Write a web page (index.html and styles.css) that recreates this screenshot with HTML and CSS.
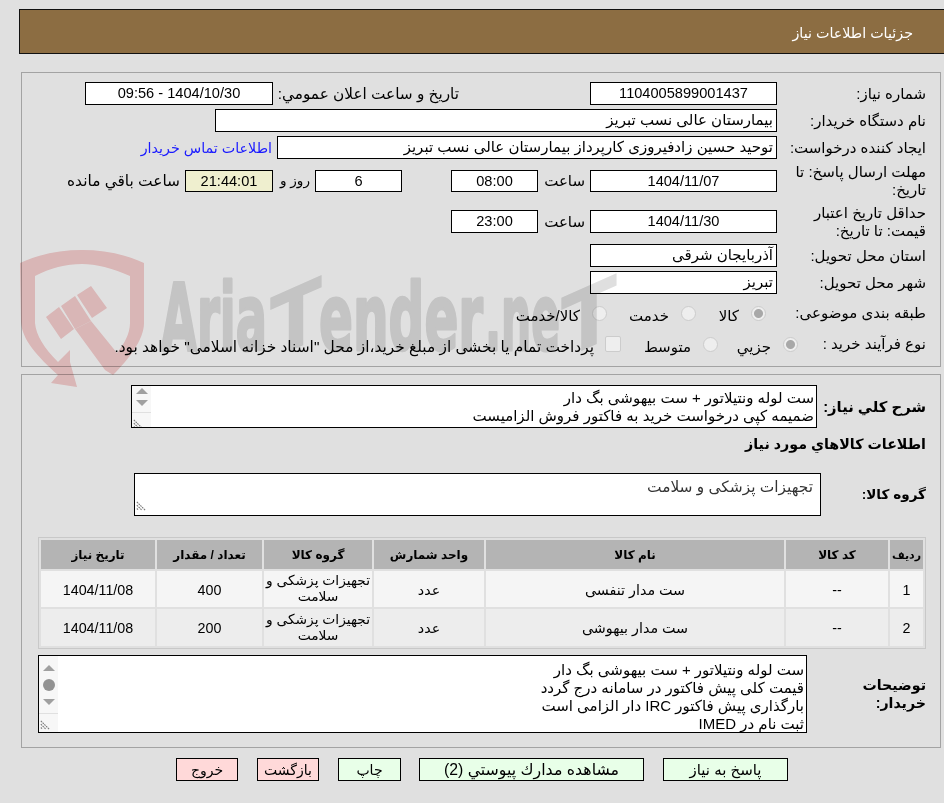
FILE: index.html
```html
<!DOCTYPE html>
<html lang="fa" dir="rtl">
<head>
<meta charset="utf-8">
<title>جزئیات اطلاعات نیاز</title>
<link rel="stylesheet" href="styles.css">
</head>
<body>
<div class="page">
  <header class="head">جزئیات اطلاعات نیاز</header>

  <section class="panel first">
    <div class="row h23">
      <label class="lab">شماره نیاز:</label>
      <div class="box w187 center">1104005899001437</div>
      <span class="lab2 pub">تاریخ و ساعت اعلان عمومي:</span>
      <div class="box w188 center">1404/10/30 - 09:56</div>
    </div>
    <div class="row h23">
      <label class="lab">نام دستگاه خریدار:</label>
      <div class="box w562">بیمارستان عالی نسب تبریز</div>
    </div>
    <div class="row h23">
      <label class="lab">ایجاد کننده درخواست:</label>
      <div class="box w500">توحید حسین زادفیروزی کارپرداز بیمارستان عالی نسب تبریز</div>
      <a class="link" href="#">اطلاعات تماس خریدار</a>
    </div>
    <div class="row h36">
      <label class="lab">مهلت ارسال پاسخ: تا تاریخ:</label>
      <div class="box w187 h22 center">1404/11/07</div>
      <span class="lab2 saat">ساعت</span>
      <div class="box w87 h22 center">08:00</div>
      <div class="box w87 h22 center days">6</div>
      <span class="lab2 rooz">روز و</span>
      <div class="box w88 h22 center timer">21:44:01</div>
      <span class="lab2 left">ساعت باقي مانده</span>
    </div>
    <div class="row h37">
      <label class="lab">حداقل تاریخ اعتبار قیمت: تا تاریخ:</label>
      <div class="box w187 center">1404/11/30</div>
      <span class="lab2 saat">ساعت</span>
      <div class="box w87 center">23:00</div>
    </div>
    <div class="row h23">
      <label class="lab">استان محل تحویل:</label>
      <div class="box w187">آذربایجان شرقی</div>
    </div>
    <div class="row h23">
      <label class="lab">شهر محل تحویل:</label>
      <div class="box w187">تبریز</div>
    </div>
    <div class="row h30">
      <label class="lab">طبقه بندی موضوعی:</label>
      <div class="opts kind">
        <span class="opt w70"><input class="rad" type="radio" name="k" disabled checked><span>کالا</span></span>
        <span class="opt w89"><input class="rad" type="radio" name="k" disabled><span>خدمت</span></span>
        <span class="opt"><input class="rad" type="radio" name="k" disabled><span>کالا/خدمت</span></span>
      </div>
    </div>
    <div class="row h24">
      <label class="lab narrow">نوع فرآیند خرید :</label>
      <div class="opts">
        <span class="opt w80"><input class="rad" type="radio" name="p" disabled checked><span>جزیي</span></span>
        <span class="opt w97"><input class="rad" type="radio" name="p" disabled><span>متوسط</span></span>
        <span class="opt tight-gap"><input class="chk" type="checkbox" disabled><span>پرداخت تمام یا بخشی از مبلغ خرید،از محل "اسناد خزانه اسلامی" خواهد بود.</span></span>
      </div>
    </div>
  </section>

  <section class="panel second">
    <div class="row">
      <label class="lab bold wide w109">شرح كلي نياز:</label>
      <div class="ta w686 h43">
        <div class="ta-text">ست لوله ونتیلاتور + ست بیهوشی بگ دار<br>ضمیمه کپی درخواست خرید به فاکتور فروش الزامیست</div>
        <div class="sb">
          <svg class="arrow" viewBox="0 0 12 6"><path d="M6 0 12 6H0Z"/></svg>
          <svg class="arrow" viewBox="0 0 12 6"><path d="M0 0H12L6 6Z"/></svg>
          <div class="grip"><svg viewBox="0 0 12 12"><path d="M1 1 11 11M1 5 7 11M1 9 3 11"/></svg></div>
        </div>
      </div>
    </div>
    <h2 class="title">اطلاعات كالاهاي مورد نياز</h2>
    <div class="row group">
      <label class="lab bold small w105">گروه کالا:</label>
      <div class="ta w687 h43 grey">
        <div class="ta-text pad-group">تجهیزات پزشکی و سلامت</div>
        <div class="sb plain">
          <div class="grip"><svg viewBox="0 0 12 12"><path d="M1 1 11 11M1 5 7 11M1 9 3 11"/></svg></div>
        </div>
      </div>
    </div>
    <div class="tablewrap">
      <table class="grid">
        <colgroup>
          <col class="c1"><col class="c2"><col class="c3"><col class="c4"><col class="c5"><col class="c6"><col class="c7">
        </colgroup>
        <thead>
          <tr><th class="thin">رديف</th><th>کد کالا</th><th>نام کالا</th><th>واحد شمارش</th><th>گروه کالا</th><th>تعداد / مقدار</th><th>تاریخ نیاز</th></tr>
        </thead>
        <tbody>
          <tr class="odd"><td>1</td><td>--</td><td>ست مدار تنفسی</td><td>عدد</td><td class="tight">تجهیزات پزشکی و سلامت</td><td>400</td><td>1404/11/08</td></tr>
          <tr class="even"><td>2</td><td>--</td><td>ست مدار بیهوشی</td><td>عدد</td><td class="tight">تجهیزات پزشکی و سلامت</td><td>200</td><td>1404/11/08</td></tr>
        </tbody>
      </table>
    </div>
    <div class="row notes">
      <label class="lab bold w119">توضیحات خریدار:</label>
      <div class="ta w769 h78">
        <div class="ta-text">ست لوله ونتیلاتور + ست بیهوشی بگ دار<br>قیمت کلی پیش فاکتور در سامانه درج گردد<br>بارگذاری پیش فاکتور IRC دار الزامی است<br>ثبت نام در IMED</div>
        <div class="sb">
          <svg class="arrow" viewBox="0 0 12 6"><path d="M6 0 12 6H0Z"/></svg>
          <span class="thumb"></span>
          <svg class="arrow" viewBox="0 0 12 6"><path d="M0 0H12L6 6Z"/></svg>
          <div class="grip"><svg viewBox="0 0 12 12"><path d="M1 1 11 11M1 5 7 11M1 9 3 11"/></svg></div>
        </div>
      </div>
    </div>
  </section>

  <nav class="actions">
    <button class="btn ok b125" type="button">پاسخ به نیاز</button>
    <button class="btn ok b225" type="button">مشاهده مدارك پیوستي (2)</button>
    <button class="btn ok b63" type="button">چاپ</button>
    <button class="btn no b62" type="button">بازگشت</button>
    <button class="btn no b62" type="button">خروج</button>
  </nav>

  <svg class="mark" viewBox="0 0 944 803" aria-hidden="true">
    <g class="shield">
      <path d="M20 263C40 254 60 250 82 250C104 250 124 254 144 263V323C144 340 128 360 113 375L105 370L75 329L91 321L117 353C124 344 130 334 130 323V276C112 268 96 264 82 264C66 264 50 268 35 276V323C36 335 44 348 58 362L70 350V362L77 387L51 383L58 375C38 357 22 340 21 322Z"/>
      <path d="M46 317 59 307 74 329 61 339Z"/>
      <path d="M61 306 75 296 91 321 75 329Z"/>
      <path d="M77 295 91 286 107 308 92 318Z"/>
    </g>
    <g class="word">
      <text x="161" y="350" textLength="106" lengthAdjust="spacingAndGlyphs">Aria</text>
      <text transform="translate(270 360) skewY(-24)" x="0" y="0" textLength="52" lengthAdjust="spacingAndGlyphs" class="bigt">T</text>
      <text x="319" y="350" textLength="164" lengthAdjust="spacingAndGlyphs">ender</text>
      <text x="485" y="350" textLength="75" lengthAdjust="spacingAndGlyphs">.ne</text>
      <text transform="translate(561 360) skewY(-24)" x="0" y="0" textLength="56" lengthAdjust="spacingAndGlyphs" class="bigt">T</text>
    </g>
  </svg>
</div>
</body>
</html>
```
FILE: styles.css
```css
* { box-sizing: border-box; }
html, body { margin: 0; padding: 0; }
body {
  background: #e0e0e0;
  color: #000;
  font-family: "Liberation Sans", "DejaVu Sans", sans-serif;
  font-size: 15px;
  line-height: 18px;
  width: 944px;
  height: 803px;
  overflow: hidden;
}
.page { position: relative; width: 944px; height: 803px; padding-top: 9px; }
.head {
  margin-left: 19px;
  height: 45px;
  background: #8c6d42;
  border: 1px solid #111;
  border-right: 0;
  color: #fff;
  padding: 14px 31px 0 0;
  font-size: 14.3px;
}
.panel {
  margin-left: 21px;
  margin-right: 3px;
  border: 1px solid #a3a3a3;
  padding-right: 14px;
  display: flex;
  flex-direction: column;
}
.first { margin-top: 18px; height: 295px; padding-top: 9px; gap: 4px; }
.second { margin-top: 7px; height: 374px; padding-top: 10px; }
.row { display: flex; align-items: center; }
.h23 { height: 23px; }
.h24 { height: 24px; }
.h30 { height: 30px; }
.h36 { height: 36px; }
.h37 { height: 37px; }
.lab { width: 149px; flex: none; padding-left: 8px; line-height: 18px; font-size: 15px; }
.narrow { width: 128px; padding-left: 0; }
.bold { font-weight: bold; font-size: 14.2px; padding-left: 6px; }
.wide { font-size: 14.8px; }
.small { font-size: 13.6px; }
.w105 { width: 105px; }
.w109 { width: 109px; }
.w119 { width: 119px; padding-left: 30px; }
.box {
  height: 23px;
  background: #fff;
  border: 1px solid #000;
  padding: 1px 3px 0;
  flex: none;
  white-space: nowrap;
  overflow: hidden;
}
.h22 { height: 22px; }
.center { text-align: center; font-size: 14.6px; }
.w87 { width: 87px; }
.w88 { width: 88px; }
.w187 { width: 187px; }
.w188 { width: 188px; }
.w500 { width: 500px; }
.w562 { width: 562px; }
.lab2 { flex: none; white-space: nowrap; }
.pub { width: 181px; margin-right: 131px; margin-left: 5px; font-size: 15.3px; }
.saat { width: 42px; margin: 0 5px; }
.days { margin-right: 49px; }
.rooz { width: 28px; margin: 0 5px 0 9px; font-size: 13.6px; }
.timer { background: #efefcf; }
.left { margin-right: 5px; font-size: 15.4px; }
.link { color: #1a1aff; text-decoration: none; margin-right: 5px; white-space: nowrap; font-size: 14.3px; }
.opts { display: flex; align-items: center; }
.kind { margin-right: 11px; }
.opt { display: flex; align-items: center; gap: 12px; flex: none; white-space: nowrap; }
.tight-gap { gap: 11px; font-size: 15.4px; }
.opt span { padding-top: 5px; }
.w70 { width: 70px; }
.w80 { width: 80px; }
.w89 { width: 89px; }
.w97 { width: 97px; }
.rad, .chk {
  appearance: none;
  margin: 0;
  width: 15px;
  height: 15px;
  flex: none;
  background: #eee;
  border: 1px solid #ccc;
  border-radius: 50%;
}
.rad:checked { background: radial-gradient(circle, #a8a8a8 0 4px, #eee 5px); }
.chk { border-radius: 2px; width: 16px; height: 16px; }
.ta {
  display: flex;
  background: #fff;
  border: 1px solid #000;
  flex: none;
  overflow: hidden;
}
.w686 { width: 686px; }
.w687 { width: 687px; }
.w769 { width: 769px; }
.h43 { height: 43px; }
.h78 { height: 78px; }
.ta-text { flex: 1; padding: 3px 2px 0 0; white-space: nowrap; overflow: hidden; line-height: 18px; }
.h78 .ta-text { padding-top: 5px; }
.grey .ta-text { color: #333; font-size: 15.4px; }
.pad-group { padding: 4px 7px 0 0; }
.sb {
  width: 19px;
  flex: none;
  background: #f7f7f7;
  display: flex;
  flex-direction: column;
  align-items: center;
  padding-top: 2px;
  gap: 6px;
}
.h78 .sb { padding-top: 9px; gap: 8px; }
.sb.plain { background: #fff; }
.arrow { width: 12px; height: 6px; fill: #a0a0a0; flex: none; }
.thumb { width: 12px; height: 12px; border-radius: 50%; background: #929292; flex: none; }
.grip {
  margin-top: auto;
  width: 100%;
  height: 20px;
  border-top: 1px solid #e0e0e0;
  padding: 6px 0 0 1px;
  direction: ltr;
}
.plain .grip { border-top: 0; }
.grip svg { display: block; width: 10px; height: 10px; fill: none; stroke: #777; stroke-width: 1.3; stroke-dasharray: 2 1; }
.title { margin: 7px 0 0; height: 18px; font-size: 14.25px; font-weight: bold; }
.group { margin-top: 20px; }
.tablewrap { margin-top: 21px; }
.grid {
  width: 888px;
  table-layout: fixed;
  border-collapse: separate;
  border-spacing: 2px;
  border: 1px solid #c8c8c8;
}
.c1 { width: 33px; }
.c2 { width: 102px; }
.c3 { width: 298px; }
.c4 { width: 110px; }
.c5 { width: 108px; }
.c6 { width: 105px; }
.c7 { width: 114px; }
th {
  height: 29px;
  padding: 0;
  background: #b4b4b4;
  font-weight: bold;
  font-size: 12px;
  text-align: center;
}
th.thin { font-size: 11px; }
td {
  height: 36px;
  padding: 2px 0 0;
  text-align: center;
  line-height: 17px;
  font-size: 14.3px;
}
td.tight { font-size: 13.8px; padding: 0; line-height: 16px; }
.odd td { background: #f5f5f5; }
.even td { background: #ededed; height: 37px; }
.notes { margin-top: 6px; }
.actions { display: flex; gap: 19px; padding-right: 156px; margin-top: 10px; }
.btn {
  height: 23px;
  border: 1px solid #000;
  padding: 0;
  color: #000;
  flex: none;
  font-family: inherit;
  font-size: 15px;
}
.ok { background: #e8ffe8; }
.no { background: #ffd9d9; font-size: 14px; }
.b125 { width: 125px; }
.b225 { width: 225px; font-size: 15.8px; }
.b63 { width: 63px; margin-right: -1px; font-size: 14px; }
.b62 { width: 62px; }
.mark {
  position: absolute;
  top: 0;
  left: 0;
  width: 944px;
  height: 803px;
  pointer-events: none;
  mix-blend-mode: multiply;
  direction: ltr;
}
.shield { fill: #f7cfcf; }
.word {
  fill: #dfdfdf;
  stroke: #dfdfdf;
  stroke-width: 3;
  stroke-linejoin: round;
  font-family: "DejaVu Sans", sans-serif;
  font-weight: bold;
  font-size: 92px;
}
.bigt { font-size: 85px; stroke-width: 0; }
```
